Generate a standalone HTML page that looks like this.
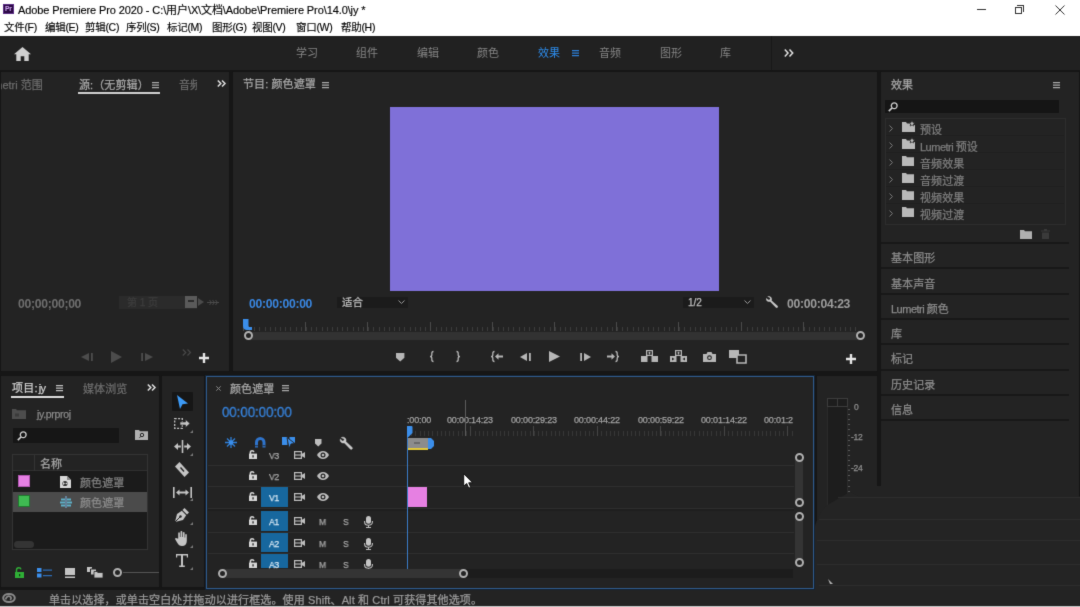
<!DOCTYPE html>
<html lang="zh-CN">
<head>
<meta charset="utf-8">
<title>Adobe Premiere Pro 2020</title>
<style>
*{box-sizing:border-box;margin:0;padding:0}
html,body{width:1080px;height:607px;overflow:hidden}
html{background:linear-gradient(to bottom,#fff 0,#fff 36px,#212121 36px,#212121 70px,#161616 70px,#161616 590px,#232323 590px,#232323 605.5px,#c8c8c8 605.5px)}
body{position:relative;filter:url(#soft);font-family:"Liberation Sans","Noto Sans CJK SC",sans-serif;font-size:11px;color:#a7a7a7;-webkit-font-smoothing:antialiased}
.abs{position:absolute}
.t{position:absolute;white-space:nowrap;line-height:1;will-change:transform;-webkit-text-stroke:0.25px currentColor}
.panel{position:absolute;background:#232323}
.dim{color:#6c6c6c}
.mn{top:22px;font-size:10.5px;color:#000;letter-spacing:-0.3px;-webkit-text-stroke:0.15px #000}
.ring{width:9px;height:9px;border-radius:50%;border:2px solid #b0b0b0;background:#232323}
#titlebar{left:0;top:0;width:1080px;height:36px;background:#fff;color:#111}
#wsbar{left:0;top:36px;width:1080px;height:34px;background:#212121}
.ws{position:absolute;top:12px;font-size:11px;color:#848484;letter-spacing:0;white-space:nowrap;line-height:1}
svg{position:absolute;overflow:visible}
</style>
</head>
<body>
<svg width="0" height="0" style="position:absolute"><filter id="soft" x="0" y="0" width="100%" height="100%" color-interpolation-filters="sRGB"><feConvolveMatrix order="3" kernelMatrix="0.0113 0.0838 0.0113 0.0838 0.6196 0.0838 0.0113 0.0838 0.0113" divisor="1" edgeMode="duplicate" preserveAlpha="false"/></filter></svg>

<!-- ===== Title bar + menu ===== -->
<div id="titlebar" class="abs">
  <div class="abs" style="left:3px;top:4px;width:10.500px;height:10px;background:#2c0a45;border:1px solid #5a2c85"></div>
  <div class="t" style="left:4.600px;top:5.800px;font-size:6.800px;font-weight:bold;color:#d2a8f5;letter-spacing:-0.3px;-webkit-text-stroke:0">Pr</div>
  <div class="t" style="left:18px;top:4.5px;font-size:11px;color:#000;letter-spacing:-0.1px;-webkit-text-stroke:0.15px #000">Adobe Premiere Pro 2020 - C:\用户\X\文档\Adobe\Premiere Pro\14.0\jy *</div>
  <div class="t mn" style="left:4.4px">文件(F)</div>
  <div class="t mn" style="left:44.5px">编辑(E)</div>
  <div class="t mn" style="left:85px">剪辑(C)</div>
  <div class="t mn" style="left:126px">序列(S)</div>
  <div class="t mn" style="left:167px">标记(M)</div>
  <div class="t mn" style="left:211.5px">图形(G)</div>
  <div class="t mn" style="left:252px">视图(V)</div>
  <div class="t mn" style="left:296px">窗口(W)</div>
  <div class="t mn" style="left:341px">帮助(H)</div>
  <!-- window controls -->
  <div class="abs" style="left:977px;top:9px;width:9px;height:1px;background:#333"></div>
  <div class="abs" style="left:1015px;top:7px;width:7px;height:7px;border:1px solid #333"></div>
  <div class="abs" style="left:1017px;top:5px;width:7px;height:7px;border-top:1px solid #333;border-right:1px solid #333"></div>
  <svg style="left:1055px;top:5px" width="10" height="10" viewBox="0 0 10 10"><path d="M0.5 0.5L9.5 9.5M9.5 0.5L0.5 9.5" stroke="#333" stroke-width="1" fill="none"/></svg>
</div>

<!-- ===== Workspace bar ===== -->
<div id="wsbar" class="abs">
  <svg style="left:14px;top:11px" width="17" height="14" viewBox="0 0 17 14"><path d="M8.5 0L0 7.2h2.3V14h4.4V9.3h3.6V14h4.4V7.2H17z" fill="#d0d0d0"/></svg>
  <div class="ws" style="left:296px">学习</div>
  <div class="ws" style="left:356px">组件</div>
  <div class="ws" style="left:417px">编辑</div>
  <div class="ws" style="left:477px">颜色</div>
  <div class="ws" style="left:538px;color:#2d8ceb">效果</div>
  <div class="ws" style="left:599px">音频</div>
  <div class="ws" style="left:660px">图形</div>
  <div class="ws" style="left:720px">库</div>
  <svg style="left:572px;top:14px" width="7" height="6.200" viewBox="0 0 7 6.200"><path d="M0 .6h7M0 3.100h7M0 5.600h7" stroke="#2d7fd6" stroke-width="1.200" fill="none"/></svg>
  <div class="abs" style="left:771px;top:0;width:1px;height:34px;background:#181818"></div>
  <svg style="left:784px;top:13px" width="10" height="8" viewBox="0 0 10 8"><path d="M.8.600L4 4 .8 7.400M5.500.600L8.700 4 5.500 7.400" stroke="#e0e0e0" stroke-width="1.500" fill="none"/></svg>
</div>

<!-- ===== Source panel ===== -->
<div class="panel" id="source" style="left:1px;top:72px;width:228px;height:299px;overflow:hidden">
  <div class="t dim" style="left:-20px;top:8px;font-size:11px">Lumetri 范围</div>
  <div class="t" style="left:78px;top:7.5px;font-size:11px;color:#a8a8a8;letter-spacing:0.1px">源:（无剪辑）</div>
  <svg style="left:151px;top:10px" width="7" height="6.200" viewBox="0 0 7 6.200"><path d="M0 .6h7M0 3.100h7M0 5.600h7" stroke="#a8a8a8" stroke-width="1.250" fill="none"/></svg>
  <div class="abs" style="left:77px;top:20px;width:82px;height:2px;background:#cfcfcf"></div>
  <div class="abs" style="left:178px;top:4px;width:18px;height:16px;overflow:hidden"><div class="t dim" style="left:0;top:3.5px;font-size:11px;letter-spacing:0.1px">音频</div></div>
  <svg style="left:216px;top:8px" width="9" height="7" viewBox="0 0 9 7"><path d="M.8.500L3.800 3.500.8 6.500M5 .5l3 3-3 3" stroke="#e0e0e0" stroke-width="1.500" fill="none"/></svg>
  <!-- timecode row -->
  <div class="t" style="left:17px;top:226px;font-size:12.2px;color:#6e6e6e;font-weight:bold;letter-spacing:-0.3px;-webkit-text-stroke:0">00;00;00;00</div>
  <div class="abs" style="left:118px;top:224px;width:78px;height:13px;background:#2b2b2b"></div>
  <div class="t" style="left:126px;top:226px;font-size:10px;color:#3d3d3d">第 1 页</div>
  <div class="abs" style="left:184px;top:224px;width:12px;height:12px;background:#5a5a5a"></div>
  <div class="abs" style="left:187px;top:228px;width:6px;height:2px;background:#2b2b2b"></div>
  <svg style="left:197px;top:226px" width="6" height="8" viewBox="0 0 6 8"><path d="M0 0l6 4-6 4z" fill="#4a4a4a"/></svg>
  <svg style="left:206px;top:227px" width="12" height="7" viewBox="0 0 12 7"><path d="M0 3.500h12M2.500 1l2 2.500-2 2.500M5.500 1l2 2.500-2 2.500M8.500 1l2 2.500-2 2.500" stroke="#4a4a4a" stroke-width="1" fill="none"/></svg>
  <!-- transport -->
  <svg style="left:80px;top:281px" width="12" height="8" viewBox="0 0 12 8"><path d="M8 0v8L0 4zM10 0h1.800v8H10z" fill="#4c4c4c"/></svg>
  <svg style="left:110px;top:279px" width="11" height="12" viewBox="0 0 11 12"><path d="M0 0l11 6-11 6z" fill="#4c4c4c"/></svg>
  <svg style="left:140px;top:281px" width="12" height="8" viewBox="0 0 12 8"><path d="M4 0v8l8-4zM.2 0H2v8H.2z" fill="#4c4c4c"/></svg>
  <svg style="left:181px;top:277px" width="10" height="7" viewBox="0 0 10 7"><path d="M.8.500L3.800 3.500.8 6.500M5.500 .5l3 3-3 3" stroke="#484848" stroke-width="1.200" fill="none"/></svg>
  <svg style="left:198px;top:281px" width="10" height="10" viewBox="0 0 10 10"><path d="M3.800 0h2.400v3.800H10v2.400H6.200V10H3.800V6.200H0V3.800h3.800z" fill="#e6e6e6"/></svg>
</div>

<!-- ===== Program panel ===== -->
<div class="panel" id="program" style="left:233px;top:72px;width:644px;height:299px;overflow:hidden">
  <div class="t" style="left:10px;top:7px;font-size:11px;color:#a8a8a8;letter-spacing:0.1px">节目: 颜色遮罩</div>
  <svg style="left:89px;top:10px" width="7" height="6.200" viewBox="0 0 7 6.200"><path d="M0 .6h7M0 3.100h7M0 5.600h7" stroke="#a8a8a8" stroke-width="1.250" fill="none"/></svg>
  <div class="abs" style="left:157px;top:35px;width:329px;height:184px;background:#7f70d8"></div>
  <!-- timecode -->
  <div class="t" style="left:16px;top:226px;font-size:12.2px;color:#3986e0;font-weight:bold;letter-spacing:-0.3px;-webkit-text-stroke:0">00:00:00:00</div>
  <div class="abs" style="left:104px;top:225px;width:71px;height:11px;background:#1b1b1b;border-radius:1px"></div>
  <div class="t" style="left:109px;top:225px;font-size:10.5px;color:#bdbdbd;letter-spacing:0.1px">适合</div>
  <svg style="left:165px;top:228px" width="7" height="4" viewBox="0 0 7 4"><path d="M.5.500l3 3 3-3" stroke="#9a9a9a" stroke-width="1" fill="none"/></svg>
  <div class="abs" style="left:450px;top:225px;width:71px;height:11px;background:#1b1b1b;border-radius:1px"></div>
  <div class="t" style="left:455px;top:226px;font-size:10px;color:#bdbdbd">1/2</div>
  <svg style="left:511px;top:228px" width="7" height="4" viewBox="0 0 7 4"><path d="M.5.500l3 3 3-3" stroke="#9a9a9a" stroke-width="1" fill="none"/></svg>
  <svg style="left:533px;top:224px" width="12" height="12" viewBox="0 0 12 12"><path d="M1.200 0.600C2.800-.3 4.900.2 5.600 1.900c.4.900.3 1.800 0 2.500l5.900 5.400c.6.600.6 1.300.1 1.800-.5.500-1.300.5-1.800-.1L4.200 5.700c-.8.300-1.700.2-2.500-.2C.3 4.800-.2 3.200.3 1.900l2 1.900 1.500-.4.400-1.500z" fill="#c4c4c4"/></svg>
  <div class="t" style="left:554px;top:226px;font-size:12.2px;color:#9c9c9c;letter-spacing:-0.3px;font-weight:bold;-webkit-text-stroke:0">00:00:04:23</div>
  <!-- ruler -->
  <div class="abs" style="left:16px;top:255px;width:612px;height:4px;background:repeating-linear-gradient(90deg,#3c3c3c 0,#3c3c3c 1px,transparent 1px,transparent 5.183px)"></div>
  <div class="abs" style="left:10px;top:250px;width:618px;height:9px;background:repeating-linear-gradient(90deg,#4a4a4a 0,#4a4a4a 1px,transparent 1px,transparent 62.200px)"></div>
  <div class="abs" style="left:16px;top:260px;width:612px;height:8px;background:#323232"></div>
  <svg style="left:10px;top:247px" width="9" height="11" viewBox="0 0 9 11"><path d="M0 0h5.500v6.500c0 1 .5 1.500 1.500 1.500h2v3H4C1.500 11 0 9.500 0 7z" fill="#3b8eea"/></svg>
  <div class="abs ring" style="left:11px;top:259px"></div>
  <div class="abs ring" style="left:623px;top:259px"></div>
  <!-- transport icons -->
  <svg style="left:163px;top:280.500px" width="8.400" height="8.400" viewBox="0 0 9 9"><path d="M0 0h9v5L4.500 9 0 5z" fill="#b6b6b6"/></svg>
  <svg style="left:196px;top:279px" width="5" height="11" viewBox="0 0 5 11"><path d="M4.500.500C3 .5 2.800 1.200 2.800 2.500v1.500c0 .8-.5 1.500-1.800 1.500 1.300 0 1.800.7 1.800 1.500v1.500c0 1.300.2 2 1.700 2" stroke="#b6b6b6" stroke-width="1.300" fill="none"/></svg>
  <svg style="left:223px;top:279px" width="5" height="11" viewBox="0 0 5 11"><path d="M.5.500C2 .5 2.200 1.200 2.200 2.500v1.500c0 .8.500 1.500 1.800 1.500-1.300 0-1.800.7-1.800 1.500v1.500c0 1.300-.2 2-1.700 2" stroke="#b6b6b6" stroke-width="1.300" fill="none"/></svg>
  <svg style="left:257px;top:279px" width="13" height="11" viewBox="0 0 13 11"><path d="M4.500.500C3 .5 2.800 1.200 2.800 2.500v1.500c0 .8-.5 1.500-1.800 1.500 1.300 0 1.800.7 1.800 1.500v1.500c0 1.300.2 2 1.700 2" stroke="#b6b6b6" stroke-width="1.300" fill="none"/><path d="M5 5.500L8.500 2.300v2.200H13v2H8.500v2.200z" fill="#b6b6b6"/></svg>
  <svg style="left:287px;top:281px" width="11" height="8" viewBox="0 0 11 8"><path d="M7 0v8L0 4zM9 0h1.800v8H9z" fill="#b6b6b6"/></svg>
  <svg style="left:316px;top:279px" width="11" height="11" viewBox="0 0 11 11"><path d="M0 0l11 5.500L0 11z" fill="#b6b6b6"/></svg>
  <svg style="left:347px;top:281px" width="11" height="8" viewBox="0 0 11 8"><path d="M4 0v8l7-4zM.2 0H2v8H.2z" fill="#b6b6b6"/></svg>
  <svg style="left:374px;top:279px" width="13" height="11" viewBox="0 0 13 11"><path d="M8.500.500C10 .5 10.200 1.200 10.200 2.500v1.500c0 .8.500 1.500 1.800 1.500-1.300 0-1.800.7-1.800 1.500v1.500c0 1.300-.2 2-1.700 2" stroke="#b6b6b6" stroke-width="1.300" fill="none"/><path d="M8 5.500L4.500 2.300v2.200H0v2h4.500v2.200z" fill="#b6b6b6"/></svg>
  <!-- lift / extract -->
  <svg style="left:408px;top:278px" width="17" height="12" viewBox="0 0 17 12"><path d="M5 0h7v6H5zM0 6h6.500v6H0zM10.500 6H17v6h-6.500z" fill="#b6b6b6"/><path d="M6.200 1.200h4.600v3.600H6.200z" fill="#232323"/><path d="M8.500 1.500L10 3.300H9v1.300H8V3.300H7z" fill="#b6b6b6"/></svg>
  <svg style="left:437px;top:278px" width="17" height="12" viewBox="0 0 17 12"><path d="M5 0h7v6H5zM0 6h6.500v6H0zM10.500 6H17v6h-6.500z" fill="#b6b6b6"/><path d="M6.200 1.200h4.600v3.600H6.200z" fill="#232323"/><path d="M8.500 1.500L10 3.300H9v1.300H8V3.300H7z" fill="#b6b6b6"/><path d="M2 7.500l2.500 1.500L2 10.500zM15 7.500l-2.500 1.500 2.500 1.500z" fill="#232323"/></svg>
  <!-- camera -->
  <svg style="left:470px;top:280px" width="13" height="10" viewBox="0 0 13 10"><path d="M0 2h3.500L4.500 0h4l1 2H13v8H0z" fill="#b6b6b6"/><circle cx="6.500" cy="5.700" r="2.400" fill="#232323"/><circle cx="6.500" cy="5.700" r="1.300" fill="#b6b6b6"/></svg>
  <!-- comparison -->
  <svg style="left:496px;top:278px" width="18" height="14" viewBox="0 0 18 14"><path d="M0 0h10v8H0z" fill="#b6b6b6"/><path d="M8 5h9v8H8z" fill="#232323" stroke="#b6b6b6" stroke-width="1.600"/></svg>
  <svg style="left:613px;top:282px" width="10" height="10" viewBox="0 0 10 10"><path d="M3.800 0h2.400v3.800H10v2.400H6.200V10H3.800V6.200H0V3.800h3.800z" fill="#e6e6e6"/></svg>
</div>

<!-- ===== Right panel column ===== -->
<div class="panel" id="right" style="left:881px;top:72px;width:198px;height:535px;overflow:hidden">
  <div class="t" style="left:10px;top:7.5px;font-size:11px;color:#a8a8a8;letter-spacing:0.1px">效果</div>
  <svg style="left:172px;top:10px" width="7" height="6" viewBox="0 0 7 6"><path d="M0 .5h7M0 3h7M0 5.500h7" stroke="#a8a8a8" stroke-width="1.250" fill="none"/></svg>
  <div class="abs" style="left:4px;top:28px;width:174px;height:13px;background:#151515"></div>
  <svg style="left:7px;top:30px" width="10" height="10" viewBox="0 0 10 10"><circle cx="6.200" cy="3.800" r="2.900" stroke="#d0d0d0" stroke-width="1.300" fill="none"/><path d="M4 6L.8 9.200" stroke="#d0d0d0" stroke-width="1.700"/></svg>
  <div class="abs" style="left:4px;top:46px;width:181px;height:107px;border:1px solid #2d2d2d"></div>
  <svg style="left:8px;top:53px" width="4" height="7" viewBox="0 0 4 7"><path d="M.5.500l3 3-3 3" stroke="#7a7a7a" stroke-width="1" fill="none"/></svg>
  <svg style="left:21px;top:50px" width="13" height="10" viewBox="0 0 13 10"><path d="M0 0h4l1 1.500h3V10H0z" fill="#b9b9b9"/><path d="M0 3h13v7H0z" fill="#b9b9b9"/><path d="M10 -1.500l.9 1.900 2 .2-1.500 1.400.4 2-1.800-1-1.800 1 .4-2L7.100.6l2-.2z" fill="#b9b9b9" stroke="#232323" stroke-width=".7"/></svg>
  <div class="t" style="left:39px;top:52.5px;font-size:11px;color:#7e7e7e;letter-spacing:0.1px">预设</div>
  <div class="abs" style="left:5px;top:63px;width:178px;height:1px;background:#1f1f1f"></div>
  <svg style="left:8px;top:70px" width="4" height="7" viewBox="0 0 4 7"><path d="M.5.500l3 3-3 3" stroke="#7a7a7a" stroke-width="1" fill="none"/></svg>
  <svg style="left:21px;top:67px" width="13" height="10" viewBox="0 0 13 10"><path d="M0 0h4l1 1.500h3V10H0z" fill="#b9b9b9"/><path d="M0 3h13v7H0z" fill="#b9b9b9"/><path d="M10 -1.500l.9 1.900 2 .2-1.500 1.400.4 2-1.800-1-1.800 1 .4-2L7.100.6l2-.2z" fill="#b9b9b9" stroke="#232323" stroke-width=".7"/></svg>
  <div class="t" style="left:39px;top:69.5px;font-size:11px;color:#7e7e7e;letter-spacing:0.1px"><span style="letter-spacing:-0.5px">Lumetri </span>预设</div>
  <div class="abs" style="left:5px;top:80px;width:178px;height:1px;background:#1f1f1f"></div>
  <svg style="left:8px;top:87px" width="4" height="7" viewBox="0 0 4 7"><path d="M.5.500l3 3-3 3" stroke="#7a7a7a" stroke-width="1" fill="none"/></svg>
  <svg style="left:21px;top:84px" width="12" height="10" viewBox="0 0 12 10"><path d="M0 0h4l1 1.300h7V10H0z" fill="#b9b9b9"/></svg>
  <div class="t" style="left:39px;top:86.5px;font-size:11px;color:#7e7e7e;letter-spacing:0.1px">音频效果</div>
  <div class="abs" style="left:5px;top:97px;width:178px;height:1px;background:#1f1f1f"></div>
  <svg style="left:8px;top:104px" width="4" height="7" viewBox="0 0 4 7"><path d="M.5.500l3 3-3 3" stroke="#7a7a7a" stroke-width="1" fill="none"/></svg>
  <svg style="left:21px;top:101px" width="12" height="10" viewBox="0 0 12 10"><path d="M0 0h4l1 1.300h7V10H0z" fill="#b9b9b9"/></svg>
  <div class="t" style="left:39px;top:103.5px;font-size:11px;color:#7e7e7e;letter-spacing:0.1px">音频过渡</div>
  <div class="abs" style="left:5px;top:114px;width:178px;height:1px;background:#1f1f1f"></div>
  <svg style="left:8px;top:121px" width="4" height="7" viewBox="0 0 4 7"><path d="M.5.500l3 3-3 3" stroke="#7a7a7a" stroke-width="1" fill="none"/></svg>
  <svg style="left:21px;top:118px" width="12" height="10" viewBox="0 0 12 10"><path d="M0 0h4l1 1.300h7V10H0z" fill="#b9b9b9"/></svg>
  <div class="t" style="left:39px;top:120.5px;font-size:11px;color:#7e7e7e;letter-spacing:0.1px">视频效果</div>
  <div class="abs" style="left:5px;top:131px;width:178px;height:1px;background:#1f1f1f"></div>
  <svg style="left:8px;top:138px" width="4" height="7" viewBox="0 0 4 7"><path d="M.5.500l3 3-3 3" stroke="#7a7a7a" stroke-width="1" fill="none"/></svg>
  <svg style="left:21px;top:135px" width="12" height="10" viewBox="0 0 12 10"><path d="M0 0h4l1 1.300h7V10H0z" fill="#b9b9b9"/></svg>
  <div class="t" style="left:39px;top:137.5px;font-size:11px;color:#7e7e7e;letter-spacing:0.1px">视频过渡</div>

  <svg style="left:139px;top:158px" width="12" height="9" viewBox="0 0 12 9"><path d="M0 0h4l1 1.300h7V9H0z" fill="#b0b0b0"/></svg>
  <svg style="left:160px;top:157px" width="9" height="10" viewBox="0 0 9 10"><path d="M0 1.500h9v1H0zM3 0h3v1.500H3zM1 3.500h7V10H1z" fill="#3a3a3a"/></svg>
  <div class="abs" style="left:0;top:170.0px;width:188px;height:2px;background:#181818"></div>
  <div class="t" style="left:10px;top:181.2px;font-size:11px;color:#8c8c8c;letter-spacing:0.1px">基本图形</div>
  <div class="abs" style="left:0;top:195.3px;width:188px;height:2px;background:#181818"></div>
  <div class="t" style="left:10px;top:206.5px;font-size:11px;color:#8c8c8c;letter-spacing:0.1px">基本声音</div>
  <div class="abs" style="left:0;top:220.6px;width:188px;height:2px;background:#181818"></div>
  <div class="t" style="left:10px;top:231.8px;font-size:11px;color:#8c8c8c;letter-spacing:0.1px"><span style="letter-spacing:-0.5px">Lumetri </span>颜色</div>
  <div class="abs" style="left:0;top:245.9px;width:188px;height:2px;background:#181818"></div>
  <div class="t" style="left:10px;top:257.1px;font-size:11px;color:#8c8c8c;letter-spacing:0.1px">库</div>
  <div class="abs" style="left:0;top:271.2px;width:188px;height:2px;background:#181818"></div>
  <div class="t" style="left:10px;top:282.4px;font-size:11px;color:#8c8c8c;letter-spacing:0.1px">标记</div>
  <div class="abs" style="left:0;top:296.5px;width:188px;height:2px;background:#181818"></div>
  <div class="t" style="left:10px;top:307.7px;font-size:11px;color:#8c8c8c;letter-spacing:0.1px">历史记录</div>
  <div class="abs" style="left:0;top:321.8px;width:188px;height:2px;background:#181818"></div>
  <div class="t" style="left:10px;top:333.0px;font-size:11px;color:#8c8c8c;letter-spacing:0.1px">信息</div>
  <div class="abs" style="left:0;top:347.1px;width:188px;height:2px;background:#181818"></div>

</div>

<!-- ===== Project panel ===== -->
<div class="panel" id="project" style="left:1px;top:376px;width:158px;height:211px;overflow:hidden">
  <div class="t" style="left:11px;top:7px;font-size:11px;color:#cfcfcf;letter-spacing:0.2px">项目:<span style="letter-spacing:-0.5px;margin-left:1px">jy</span></div>
  <svg style="left:55px;top:9px" width="7" height="6.200" viewBox="0 0 7 6.200"><path d="M0 .6h7M0 3.100h7M0 5.600h7" stroke="#c0c0c0" stroke-width="1.250" fill="none"/></svg>
  <div class="abs" style="left:10px;top:20px;width:53px;height:2px;background:#dcdcdc"></div>
  <div class="t dim" style="left:82px;top:7.5px;font-size:11px;letter-spacing:0.1px">媒体浏览</div>
  <svg style="left:146px;top:8px" width="9" height="7" viewBox="0 0 9 7"><path d="M.8.500L3.800 3.500.8 6.500M5 .5l3 3-3 3" stroke="#e0e0e0" stroke-width="1.500" fill="none"/></svg>
  <!-- project file -->
  <svg style="left:11px;top:33px" width="14" height="10" viewBox="0 0 14 10"><path d="M0 0h4l1 1.300h9V10H0z" fill="#4d4d4d"/><path d="M3 4.500h4v3H3z" fill="#3a3a3a"/></svg>
  <div class="t" style="left:36px;top:33px;font-size:10.5px;color:#8a8a8a;letter-spacing:-0.3px">jy.prproj</div>
  <!-- search -->
  <div class="abs" style="left:12px;top:52px;width:106px;height:15px;background:#161616"></div>
  <svg style="left:16px;top:55px" width="10" height="10" viewBox="0 0 10 10"><circle cx="6.200" cy="3.800" r="2.900" stroke="#d0d0d0" stroke-width="1.300" fill="none"/><path d="M4 6L.8 9.200" stroke="#d0d0d0" stroke-width="1.700"/></svg>
  <svg style="left:134px;top:54px" width="13" height="10" viewBox="0 0 13 10"><path d="M0 0h4l1 1.300h8V10H0z" fill="#b0b0b0"/><circle cx="7" cy="5" r="1.700" stroke="#232323" stroke-width="1" fill="none"/><path d="M5.800 6.300L4.500 7.800" stroke="#232323" stroke-width="1"/></svg>
  <!-- table -->
  <div class="abs" style="left:11px;top:78px;width:136px;height:96px;background:#1b1b1b;border:1px solid #333"></div>
  <div class="abs" style="left:12px;top:79px;width:134px;height:16px;background:#232323;border-bottom:1px solid #303030"></div>
  <div class="abs" style="left:33px;top:79px;width:1px;height:16px;background:#333"></div>
  <div class="t" style="left:39px;top:83px;font-size:11px;color:#a8a8a8;letter-spacing:0.1px">名称</div>
  <div class="abs" style="left:17px;top:99px;width:12px;height:12px;background:#e680e4;border:1px solid #b458b4"></div>
  <svg style="left:59px;top:100px" width="11" height="12" viewBox="0 0 11 12"><path d="M0 0h7l4 4v8H0z" fill="#d8d8d8"/><path d="M7 0v4h4" fill="#8a8a8a"/><circle cx="5" cy="7.500" r="2.600" fill="#333"/><path d="M5 7.500L3 6v3zM5 7.500l2.300-1v2z" fill="#d8d8d8"/></svg>
  <div class="t" style="left:79px;top:101.5px;font-size:11px;color:#808080;letter-spacing:0.1px">颜色遮罩</div>
  <div class="abs" style="left:12px;top:116px;width:134px;height:20px;background:#4b4b4b"></div>
  <div class="abs" style="left:17px;top:119px;width:12px;height:12px;background:#3fbb52;border:1px solid #1f7a2e"></div>
  <svg style="left:59px;top:120px" width="12" height="12" viewBox="0 0 12 12"><path d="M5.500 0h1v12h-1z" fill="#7fb6e8"/><path d="M1 2.500h4v2H1zM7 2.500h4v2H7zM0 5.500h5v2H0zM7 5.500h5v2H7zM1 8.500h4v2H1zM7 8.500h4v2H7z" fill="#5fb0c8"/></svg>
  <div class="t" style="left:79px;top:121.5px;font-size:11px;color:#8c8c8c;letter-spacing:0.1px">颜色遮罩</div>
  <div class="abs" style="left:13px;top:165px;width:20px;height:7px;border-radius:4px;background:#343434"></div>
  <!-- bottom icons -->
  <svg style="left:14px;top:191px" width="9" height="11" viewBox="0 0 9 11"><path d="M0 5h9v6H0z" fill="#2fae36"/><path d="M1.500 5V3c0-1.500 1-2.300 2.300-2.300 1.200 0 2 .6 2.200 1.600" stroke="#2fae36" stroke-width="1.400" fill="none"/><path d="M4 7h1.200v2.300H4z" fill="#0d3d10"/></svg>
  <svg style="left:36px;top:192px" width="15" height="10" viewBox="0 0 15 10"><path d="M0 0h4.500v4H0zM0 5.500h4.500v4H0z" fill="#3b8eea"/><path d="M6 1.500h9v1.300H6zM6 7h9v1.300H6z" fill="#2d6cb5"/></svg>
  <svg style="left:64px;top:192px" width="10" height="10" viewBox="0 0 10 10"><path d="M0 0h10v7H0zM0 8.500h10V10H0z" fill="#c4c4c4"/></svg>
  <svg style="left:86px;top:191px" width="17" height="11" viewBox="0 0 17 11"><path d="M0 0h5v5H0z" fill="#c4c4c4"/><path d="M3.500 2h6v6h-6z" fill="#c4c4c4" stroke="#232323" stroke-width="1"/><path d="M7 4.500h3l.8 1H16V11H7z" fill="#c4c4c4" stroke="#232323" stroke-width=".8"/></svg>
  <div class="abs" style="left:122px;top:196px;width:40px;height:1px;background:#555"></div>
  <div class="abs ring" style="left:112px;top:192px;width:9px;height:9px"></div>
</div>

<!-- ===== Tools panel ===== -->
<div class="panel" id="tools" style="left:162px;top:376px;width:42px;height:211px;overflow:hidden">
  <div class="abs" style="left:10px;top:16px;width:21px;height:19px;background:#161616;border-radius:1px"></div>
  <svg style="left:15px;top:19px" width="11" height="14" viewBox="0 0 11 14"><path d="M0 0l11 8.500-5.500.8L3 14z" fill="#3c9af6"/></svg>
  <!-- track select -->
  <svg style="left:12px;top:42px" width="16" height="11" viewBox="0 0 16 11"><path d="M.7.700h7.600v9.600H.7z" stroke="#c4c4c4" stroke-width="1.300" stroke-dasharray="2 1.400" fill="none"/><path d="M16 5.500L11.500 1.500v2.500H6v3h5.500v2.500z" fill="#c4c4c4" stroke="#232323" stroke-width=".6"/></svg>
  <svg style="left:28px;top:54px" width="3" height="3" viewBox="0 0 3 3"><path d="M3 0v3H0z" fill="#7a7a7a"/></svg>
  <!-- ripple -->
  <svg style="left:12px;top:64px" width="17" height="13" viewBox="0 0 17 13"><path d="M7.700 0h1.600v13H7.700z" fill="#c4c4c4"/><path d="M0 6.500L4 3v2.500h2.800v2H4V10zM17 6.500L13 3v2.500h-2.800v2H13V10z" fill="#c4c4c4"/></svg>
  <svg style="left:28px;top:77px" width="3" height="3" viewBox="0 0 3 3"><path d="M3 0v3H0z" fill="#7a7a7a"/></svg>
  <!-- razor -->
  <svg style="left:13px;top:86px" width="14" height="16" viewBox="0 0 14 16"><path d="M4.500 0L14 10.500 9.500 15 0 4.500z" fill="#c4c4c4"/><path d="M5.500 5.500l3.500 4" stroke="#232323" stroke-width="1.300"/></svg>
  <!-- slip -->
  <svg style="left:11px;top:111px" width="19" height="11" viewBox="0 0 19 11"><path d="M0 0h1.600v11H0zM17.400 0H19v11h-1.600z" fill="#c4c4c4"/><path d="M3 5.500L6.500 2.500v2h6v-2L16 5.500 12.500 8.500v-2h-6v2z" fill="#c4c4c4"/></svg>
  <svg style="left:28px;top:122px" width="3" height="3" viewBox="0 0 3 3"><path d="M3 0v3H0z" fill="#7a7a7a"/></svg>
  <!-- pen -->
  <svg style="left:13px;top:132px" width="14" height="14" viewBox="0 0 14 14"><path d="M9.500 0L14 4.500 12 6.500 7.500 2z" fill="#c4c4c4"/><path d="M6.800 2.800L11.200 7.200 8 12 0 14 2 6z" fill="#c4c4c4"/><path d="M0 14l5-5" stroke="#232323" stroke-width="1"/><circle cx="5.500" cy="8.500" r="1.200" fill="#232323"/></svg>
  <svg style="left:28px;top:146px" width="3" height="3" viewBox="0 0 3 3"><path d="M3 0v3H0z" fill="#7a7a7a"/></svg>
  <!-- hand -->
  <svg style="left:13px;top:155px" width="14" height="15" viewBox="0 0 14 15"><path d="M3.200 7.500V2.200c0-1.200 1.700-1.200 1.700 0V6h.6V1c0-1.300 1.800-1.300 1.800 0v5h.6V1.800c0-1.200 1.700-1.200 1.700 0V6.500h.6V3.800c0-1.200 1.600-1.200 1.600 0V10c0 3-1.800 5-4.800 5-2.300 0-3.500-1-4.600-3L.3 8.500c-.6-1.200.8-2 1.600-1z" fill="#c4c4c4"/></svg>
  <svg style="left:28px;top:169px" width="3" height="3" viewBox="0 0 3 3"><path d="M3 0v3H0z" fill="#7a7a7a"/></svg>
  <!-- type -->
  <svg style="left:14px;top:178px" width="12" height="13" viewBox="0 0 12 13"><path d="M0 0h12v3.500h-1.200V1.600H7v9.800h1.800V13H3.200v-1.600H5V1.600H1.200v1.900H0z" fill="#c4c4c4"/></svg>
  <svg style="left:28px;top:191px" width="3" height="3" viewBox="0 0 3 3"><path d="M3 0v3H0z" fill="#7a7a7a"/></svg>
</div>

<!-- ===== Timeline panel ===== -->
<div class="panel" id="timeline" style="left:206px;top:376px;width:608px;height:213px;border:1px solid #2f5a8a;box-shadow:0 0 0 1px rgba(20,45,75,0.55);overflow:hidden">
  <svg style="left:9px;top:9px" width="5" height="5" viewBox="0 0 5 5"><path d="M.3.300l4.400 4.400M4.700.3L.3 4.700" stroke="#8a8a8a" stroke-width="1" fill="none"/></svg>
  <div class="t" style="left:23px;top:6.5px;font-size:11px;color:#a8a8a8;letter-spacing:0.1px">颜色遮罩</div>
  <svg style="left:75px;top:8px" width="7" height="6.200" viewBox="0 0 7 6.200"><path d="M0 .6h7M0 3.100h7M0 5.600h7" stroke="#a8a8a8" stroke-width="1.250" fill="none"/></svg>
  <div class="t" style="left:14.5px;top:28px;font-size:14.6px;color:#3783dc;-webkit-text-stroke:0.35px #3783dc;transform:scaleX(0.905);transform-origin:0 0;margin-left:0.5px;margin-top:-0.5px">00:00:00:00</div>
  <!-- toolbar icons -->
  <svg style="left:18px;top:59.5px" width="12" height="11" viewBox="0 0 12 11"><path d="M6 0v11M0 5.500h12M2 1.500l8 8M10 1.500l-8 8" stroke="#2f7fd8" stroke-width="1.300"/><circle cx="6" cy="5.500" r="2.300" fill="#3b8eea"/></svg>
  <svg style="left:48px;top:60px" width="10.500" height="10.500" viewBox="0 0 10.500 10.500"><path d="M1.500 10.500V5.250a3.750 3.750 0 017.500 0V10.500" stroke="#2f74cc" stroke-width="3" fill="none"/><path d="M0 8.700h3M7.500 8.700h3" stroke="#232323" stroke-width=".8"/></svg>
  <svg style="left:75px;top:59.5px" width="14" height="12" viewBox="0 0 14 12"><path d="M0 0h5.500v8H0zM7.500 0H13v6H7.500z" fill="#3b8eea"/><path d="M5 .5l8 6-4 .5-2 4.500z" fill="#3b8eea" stroke="#232323" stroke-width=".9"/></svg>
  <svg style="left:107.5px;top:61.80000000000001px" width="6.500" height="7.500" viewBox="0 0 6.500 7.500"><path d="M0 0h6.500v4.500L3.250 7.500 0 4.500z" fill="#bdbdbd"/></svg>
  <svg style="left:133px;top:59.5px" width="12.500" height="12.500" viewBox="0 0 12 12"><path d="M1.200 0.600C2.800-.3 4.900.2 5.600 1.900c.4.900.3 1.800 0 2.500l5.900 5.400c.6.600.6 1.300.1 1.800-.5.500-1.300.5-1.800-.1L4.200 5.700c-.8.300-1.700.2-2.500-.2C.3 4.800-.2 3.200.3 1.900l2 1.900 1.500-.4.400-1.500z" fill="#cacaca" stroke="#cacaca" stroke-width=".4"/></svg>
  <!-- separators -->
<div class="abs" style="left:1px;top:88px;width:586px;height:1px;background:#2e2e2e"></div>
<div class="abs" style="left:1px;top:109px;width:586px;height:1px;background:#2e2e2e"></div>
<div class="abs" style="left:1px;top:131px;width:586px;height:1px;background:#2e2e2e"></div>
<div class="abs" style="left:1px;top:155px;width:586px;height:1px;background:#2e2e2e"></div>
<div class="abs" style="left:1px;top:176px;width:586px;height:1px;background:#2e2e2e"></div>
<div class="abs" style="left:1px;top:132px;width:586px;height:2px;background:#1e1e1e"></div>

  <!-- track headers -->
<svg style="left:42px;top:73px" width="8" height="9" viewBox="0 0 8 9"><path d="M0 3.600h8V9H0z" fill="#d6d6d6"/><path d="M1.400 4V2.500C1.400 1.300 2.100 .8 3.100 .8s1.600.5 1.700 1.400" stroke="#d6d6d6" stroke-width="1.600" fill="none"/><path d="M3.400 5.200h1.300v2.300H3.400z" fill="#232323"/></svg><div class="t" style="left:62px;top:74px;font-size:9.5px;color:#a8a8a8;letter-spacing:-0.3px;transform:scaleX(0.9);transform-origin:0 0">V3</div><svg style="left:87px;top:74px" width="11" height="8" viewBox="0 0 11 8"><path d="M.6.600h6.800v6.800H.6z" stroke="#bdbdbd" stroke-width="1.200" fill="none"/><path d="M.6 4h6.800" stroke="#bdbdbd" stroke-width="1.100"/><path d="M7.500 3L11 1v6L7.500 5z" fill="#bdbdbd"/></svg><svg style="left:110px;top:74px" width="12" height="8" viewBox="0 0 12 8"><path d="M0 4C1.500 1.500 3.500 0 6 0s4.500 1.500 6 4c-1.500 2.500-3.500 4-6 4S1.500 6.500 0 4z" fill="#bdbdbd"/><circle cx="6" cy="4" r="2.500" fill="#232323"/><circle cx="6" cy="4" r="1.300" fill="#bdbdbd"/></svg>
<svg style="left:42px;top:94px" width="8" height="9" viewBox="0 0 8 9"><path d="M0 3.600h8V9H0z" fill="#d6d6d6"/><path d="M1.400 4V2.500C1.400 1.300 2.100 .8 3.100 .8s1.600.5 1.700 1.400" stroke="#d6d6d6" stroke-width="1.600" fill="none"/><path d="M3.400 5.200h1.300v2.300H3.400z" fill="#232323"/></svg><div class="t" style="left:62px;top:95px;font-size:9.5px;color:#a8a8a8;letter-spacing:-0.3px;transform:scaleX(0.9);transform-origin:0 0">V2</div><svg style="left:87px;top:95px" width="11" height="8" viewBox="0 0 11 8"><path d="M.6.600h6.800v6.800H.6z" stroke="#bdbdbd" stroke-width="1.200" fill="none"/><path d="M.6 4h6.800" stroke="#bdbdbd" stroke-width="1.100"/><path d="M7.500 3L11 1v6L7.500 5z" fill="#bdbdbd"/></svg><svg style="left:110px;top:95px" width="12" height="8" viewBox="0 0 12 8"><path d="M0 4C1.500 1.500 3.500 0 6 0s4.500 1.500 6 4c-1.500 2.500-3.500 4-6 4S1.500 6.500 0 4z" fill="#bdbdbd"/><circle cx="6" cy="4" r="2.500" fill="#232323"/><circle cx="6" cy="4" r="1.300" fill="#bdbdbd"/></svg>
<div class="abs" style="left:54px;top:110px;width:27px;height:20px;background:#17679e"></div><svg style="left:42px;top:115px" width="8" height="9" viewBox="0 0 8 9"><path d="M0 3.600h8V9H0z" fill="#d6d6d6"/><path d="M1.400 4V2.500C1.400 1.300 2.100 .8 3.100 .8s1.600.5 1.700 1.400" stroke="#d6d6d6" stroke-width="1.600" fill="none"/><path d="M3.400 5.200h1.300v2.300H3.400z" fill="#232323"/></svg><div class="t" style="left:62px;top:116px;font-size:9.5px;color:#d6e6f2;letter-spacing:-0.3px;transform:scaleX(0.9);transform-origin:0 0">V1</div><svg style="left:87px;top:116px" width="11" height="8" viewBox="0 0 11 8"><path d="M.6.600h6.800v6.800H.6z" stroke="#bdbdbd" stroke-width="1.200" fill="none"/><path d="M.6 4h6.800" stroke="#bdbdbd" stroke-width="1.100"/><path d="M7.500 3L11 1v6L7.500 5z" fill="#bdbdbd"/></svg><svg style="left:110px;top:116px" width="12" height="8" viewBox="0 0 12 8"><path d="M0 4C1.500 1.500 3.500 0 6 0s4.500 1.500 6 4c-1.500 2.500-3.500 4-6 4S1.500 6.500 0 4z" fill="#bdbdbd"/><circle cx="6" cy="4" r="2.500" fill="#232323"/><circle cx="6" cy="4" r="1.300" fill="#bdbdbd"/></svg>
<div class="abs" style="left:54px;top:134px;width:27px;height:20px;background:#17679e"></div><svg style="left:42px;top:139px" width="8" height="9" viewBox="0 0 8 9"><path d="M0 3.600h8V9H0z" fill="#d6d6d6"/><path d="M1.400 4V2.500C1.400 1.300 2.100 .8 3.100 .8s1.600.5 1.700 1.400" stroke="#d6d6d6" stroke-width="1.600" fill="none"/><path d="M3.400 5.200h1.300v2.300H3.400z" fill="#232323"/></svg><div class="t" style="left:62px;top:140px;font-size:9.5px;color:#d6e6f2;letter-spacing:-0.3px;transform:scaleX(0.9);transform-origin:0 0">A1</div><svg style="left:87px;top:140px" width="11" height="8" viewBox="0 0 11 8"><path d="M.6.600h6.800v6.800H.6z" stroke="#bdbdbd" stroke-width="1.200" fill="none"/><path d="M.6 4h6.800" stroke="#bdbdbd" stroke-width="1.100"/><path d="M7.500 3L11 1v6L7.500 5z" fill="#bdbdbd"/></svg><div class="t" style="left:112px;top:140px;font-size:9.5px;color:#a8a8a8;letter-spacing:-0.3px;transform:scaleX(0.9);transform-origin:0 0">M</div><div class="t" style="left:136px;top:140px;font-size:9.5px;color:#a8a8a8;letter-spacing:-0.3px;transform:scaleX(0.9);transform-origin:0 0">S</div><svg style="left:157px;top:139px" width="9" height="12" viewBox="0 0 9 12"><rect x="2" y="0" width="5" height="7.800" rx="2.500" fill="#c4c4c4"/><path d="M.6 5v1c0 2 1.600 3.300 3.900 3.300S8.400 8 8.400 6V5" stroke="#bdbdbd" stroke-width="1.100" fill="none"/><path d="M4 9.300h1v1.700H4zM2 11h5v1H2z" fill="#bdbdbd"/></svg>
<div class="abs" style="left:54px;top:156px;width:27px;height:19px;background:#17679e"></div><svg style="left:42px;top:161px" width="8" height="9" viewBox="0 0 8 9"><path d="M0 3.600h8V9H0z" fill="#d6d6d6"/><path d="M1.400 4V2.500C1.400 1.300 2.100 .8 3.100 .8s1.600.5 1.700 1.400" stroke="#d6d6d6" stroke-width="1.600" fill="none"/><path d="M3.400 5.200h1.300v2.300H3.400z" fill="#232323"/></svg><div class="t" style="left:62px;top:162px;font-size:9.5px;color:#d6e6f2;letter-spacing:-0.3px;transform:scaleX(0.9);transform-origin:0 0">A2</div><svg style="left:87px;top:162px" width="11" height="8" viewBox="0 0 11 8"><path d="M.6.600h6.800v6.800H.6z" stroke="#bdbdbd" stroke-width="1.200" fill="none"/><path d="M.6 4h6.800" stroke="#bdbdbd" stroke-width="1.100"/><path d="M7.500 3L11 1v6L7.500 5z" fill="#bdbdbd"/></svg><div class="t" style="left:112px;top:162px;font-size:9.5px;color:#a8a8a8;letter-spacing:-0.3px;transform:scaleX(0.9);transform-origin:0 0">M</div><div class="t" style="left:136px;top:162px;font-size:9.5px;color:#a8a8a8;letter-spacing:-0.3px;transform:scaleX(0.9);transform-origin:0 0">S</div><svg style="left:157px;top:161px" width="9" height="12" viewBox="0 0 9 12"><rect x="2" y="0" width="5" height="7.800" rx="2.500" fill="#c4c4c4"/><path d="M.6 5v1c0 2 1.600 3.300 3.900 3.300S8.400 8 8.400 6V5" stroke="#bdbdbd" stroke-width="1.100" fill="none"/><path d="M4 9.300h1v1.700H4zM2 11h5v1H2z" fill="#bdbdbd"/></svg>
<div class="abs" style="left:54px;top:177px;width:27px;height:14px;background:#17679e"></div><svg style="left:42px;top:182px" width="8" height="9" viewBox="0 0 8 9"><path d="M0 3.600h8V9H0z" fill="#d6d6d6"/><path d="M1.400 4V2.500C1.400 1.300 2.100 .8 3.100 .8s1.600.5 1.700 1.400" stroke="#d6d6d6" stroke-width="1.600" fill="none"/><path d="M3.400 5.200h1.300v2.300H3.400z" fill="#232323"/></svg><div class="t" style="left:62px;top:183px;font-size:9.5px;color:#d6e6f2;letter-spacing:-0.3px;transform:scaleX(0.9);transform-origin:0 0">A3</div><svg style="left:87px;top:183px" width="11" height="8" viewBox="0 0 11 8"><path d="M.6.600h6.800v6.800H.6z" stroke="#bdbdbd" stroke-width="1.200" fill="none"/><path d="M.6 4h6.800" stroke="#bdbdbd" stroke-width="1.100"/><path d="M7.500 3L11 1v6L7.500 5z" fill="#bdbdbd"/></svg><div class="t" style="left:112px;top:183px;font-size:9.5px;color:#a8a8a8;letter-spacing:-0.3px;transform:scaleX(0.9);transform-origin:0 0">M</div><div class="t" style="left:136px;top:183px;font-size:9.5px;color:#a8a8a8;letter-spacing:-0.3px;transform:scaleX(0.9);transform-origin:0 0">S</div><svg style="left:157px;top:182px" width="9" height="12" viewBox="0 0 9 12"><rect x="2" y="0" width="5" height="7.800" rx="2.500" fill="#c4c4c4"/><path d="M.6 5v1c0 2 1.600 3.300 3.900 3.300S8.400 8 8.400 6V5" stroke="#bdbdbd" stroke-width="1.100" fill="none"/><path d="M4 9.300h1v1.700H4zM2 11h5v1H2z" fill="#bdbdbd"/></svg>

  <!-- ruler -->
<div class="t" style="left:240.4px;top:39px;font-size:9px;color:#a2a2a2;letter-spacing:-0.15px">00:00:14:23</div>
<div class="t" style="left:303.9px;top:39px;font-size:9px;color:#a2a2a2;letter-spacing:-0.15px">00:00:29:23</div>
<div class="t" style="left:367.4px;top:39px;font-size:9px;color:#a2a2a2;letter-spacing:-0.15px">00:00:44:22</div>
<div class="t" style="left:430.9px;top:39px;font-size:9px;color:#a2a2a2;letter-spacing:-0.15px">00:00:59:22</div>
<div class="t" style="left:494.4px;top:39px;font-size:9px;color:#a2a2a2;letter-spacing:-0.15px">00:01:14:22</div>
<div class="t" style="left:557.4px;top:39px;font-size:9px;color:#a2a2a2;letter-spacing:-0.15px">00:01:2</div>
<div class="t" style="left:199.5px;top:39px;font-size:9px;color:#a2a2a2;letter-spacing:-0.15px">:00:00</div>

  <div class="abs" style="left:199.6px;top:54px;width:386px;height:5px;background:repeating-linear-gradient(90deg,#373737 0,#373737 1px,transparent 1px,transparent 4.2267px)"></div>
  <div class="abs" style="left:263.0px;top:49px;width:323px;height:10px;background:repeating-linear-gradient(90deg,#454545 0,#454545 1px,transparent 1px,transparent 63.4px)"></div>
  <div class="abs" style="left:258px;top:23px;width:1px;height:36px;background:#5c5c5c"></div>
  <!-- work area bar -->
  <div class="abs" style="left:201px;top:61px;width:20px;height:10px;background:#8c8c8c"></div>
  <div class="abs" style="left:207px;top:65px;width:6px;height:2px;background:#6a6a6a"></div>
  <div class="abs" style="left:200px;top:71px;width:21px;height:2px;background:#e3c93a"></div>
  <svg style="left:221px;top:61px" width="6" height="11" viewBox="0 0 6 11"><path d="M0 0h3l3 3v5l-3 3H0z" fill="#3b8eea"/></svg>
  <!-- clip -->
  <div class="abs" style="left:200.500px;top:110px;width:19px;height:20px;background:#e680e2"></div>
  <!-- playhead -->
  <div class="abs" style="left:199.500px;top:59px;width:1.500px;height:133px;background:#3a7bc6"></div>
  <svg style="left:199.500px;top:49px" width="5.500" height="11" viewBox="0 0 5.500 11"><path d="M0 0h4.500q1 0 1 1v6L1.500 11H0z" fill="#3b8eea"/></svg>
  <!-- h scrollbar -->
  <div class="abs" style="left:15px;top:192px;width:571px;height:9px;background:#1c1c1c"></div>
  <div class="abs" style="left:15px;top:192px;width:241px;height:9px;background:#343434"></div>
  <div class="abs ring" style="left:11px;top:192px"></div>
  <div class="abs ring" style="left:252px;top:192px"></div>
  <!-- v scrollbars -->
  <div class="abs" style="left:588px;top:81px;width:8px;height:44px;background:#343434"></div>
  <div class="abs" style="left:588px;top:139px;width:8px;height:46px;background:#343434"></div>
  <div class="abs ring" style="left:587.5px;top:76px"></div>
  <div class="abs ring" style="left:587.5px;top:120.5px"></div>
  <div class="abs ring" style="left:587.5px;top:134.5px"></div>
  <div class="abs ring" style="left:587.5px;top:180.5px"></div>
  <!-- mouse cursor -->
  <svg style="left:256px;top:96px" width="11" height="16" viewBox="0 0 11 16"><path d="M.7.700v12.500l3-2.700 2 4.700 2-.9-2-4.500h4z" fill="#fff" stroke="#111" stroke-width="1"/></svg>
</div>

<!-- ===== Audio meters ===== -->
<div class="panel" id="meters" style="left:817px;top:376px;width:60px;height:211px;overflow:hidden">
  <div class="abs" style="left:10px;top:22px;width:21px;height:110px;background:#1d1d1d;border:1px solid #2a2a2a"></div>
  <div class="abs" style="left:10px;top:22px;width:11px;height:9px;border:1px solid #3c3c3c"></div>
  <div class="abs" style="left:20px;top:22px;width:11px;height:9px;border:1px solid #3c3c3c"></div>
  <div class="abs" style="left:31px;top:33.0px;width:2px;height:1px;background:#5a5a5a"></div><div class="abs" style="left:31px;top:38.1px;width:2px;height:1px;background:#5a5a5a"></div><div class="abs" style="left:31px;top:43.2px;width:2px;height:1px;background:#5a5a5a"></div><div class="abs" style="left:31px;top:48.3px;width:2px;height:1px;background:#5a5a5a"></div><div class="abs" style="left:31px;top:53.4px;width:2px;height:1px;background:#5a5a5a"></div><div class="abs" style="left:31px;top:58.5px;width:2px;height:1px;background:#5a5a5a"></div><div class="abs" style="left:31px;top:63.6px;width:2px;height:1px;background:#5a5a5a"></div><div class="abs" style="left:31px;top:68.7px;width:2px;height:1px;background:#5a5a5a"></div><div class="abs" style="left:31px;top:73.8px;width:2px;height:1px;background:#5a5a5a"></div><div class="abs" style="left:31px;top:78.9px;width:2px;height:1px;background:#5a5a5a"></div><div class="abs" style="left:31px;top:84.0px;width:2px;height:1px;background:#5a5a5a"></div><div class="abs" style="left:31px;top:89.1px;width:2px;height:1px;background:#5a5a5a"></div><div class="abs" style="left:31px;top:94.2px;width:2px;height:1px;background:#5a5a5a"></div><div class="abs" style="left:31px;top:99.3px;width:2px;height:1px;background:#5a5a5a"></div><div class="abs" style="left:31px;top:104.4px;width:2px;height:1px;background:#5a5a5a"></div><div class="abs" style="left:31px;top:109.5px;width:2px;height:1px;background:#5a5a5a"></div><div class="abs" style="left:31px;top:114.6px;width:2px;height:1px;background:#5a5a5a"></div>
  <div class="t" style="left:37px;top:27px;font-size:8.500px;color:#8f8f8f">0</div>
  <div class="t" style="left:34px;top:57px;font-size:8.500px;color:#8f8f8f;letter-spacing:-0.300px">-12</div>
  <div class="t" style="left:34px;top:88px;font-size:8.500px;color:#8f8f8f;letter-spacing:-0.300px">-24</div>
</div>

<!-- vertical divider between meters and right column stops here; below is a softened region -->
<div class="abs" style="left:877px;top:486px;width:4px;height:104px;background:#232323"></div>
<svg style="left:815px;top:486px" width="265" height="104" viewBox="0 0 265 104"><path d="M0 104V40C3 30 8 22 14 18L33 7C36 5 40 10 46 10.500H265V104z" fill="#242424"/></svg>
<div class="abs" style="left:838px;top:497px;width:242px;height:1px;background:#2d2d2d"></div>
<div class="abs" style="left:819px;top:519px;width:261px;height:1px;background:#2d2d2d"></div>
<div class="abs" style="left:817px;top:540px;width:263px;height:1px;background:#2d2d2d"></div>
<div class="abs" style="left:817px;top:564px;width:263px;height:1px;background:#2d2d2d"></div>
<div class="abs" style="left:819px;top:585px;width:261px;height:1px;background:#2d2d2d"></div>

<svg style="left:828px;top:579px" width="5" height="5" viewBox="0 0 5 5"><path d="M0 0l5 5H2z" fill="#b0b0b0"/></svg>

<!-- ===== Status bar ===== -->
<div class="panel" id="status" style="left:0;top:590px;width:1080px;height:17px;background:#232323">
  <svg style="left:2px;top:3px" width="14" height="10" viewBox="0 0 14 10"><ellipse cx="7" cy="5" rx="5.800" ry="4" stroke="#8a8a8a" stroke-width="2" fill="none"/><path d="M3.500 6.500c1-3 3-4 4.500-3s1.500 2.500 0 3.300" stroke="#8a8a8a" stroke-width="1.700" fill="none"/></svg>
  <div class="t" style="left:49px;top:4.5px;font-size:11px;color:#9a9a9a;letter-spacing:0.12px">单击以选择，或单击空白处并拖动以进行框选。使用 Shift、Alt 和 Ctrl 可获得其他选项。</div>
  <div class="abs" style="left:0;top:15.500px;width:1080px;height:1.500px;background:#c8c8c8"></div>
</div>

</body>
</html>
